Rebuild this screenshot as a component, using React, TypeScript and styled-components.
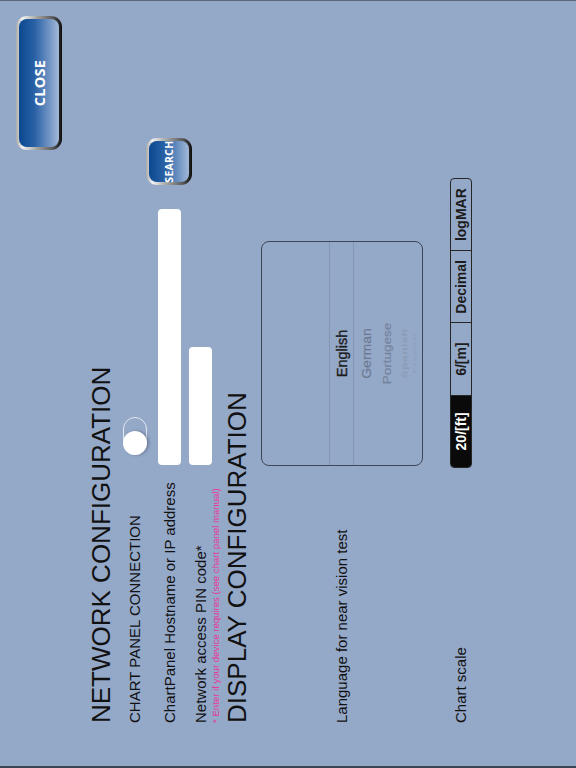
import styled, { createGlobalStyle } from "styled-components"

const GlobalStyle = createGlobalStyle`
  html, body {
    margin: 0;
    padding: 0;
    background: #94a8c8;
  }
  body {
    font-family: "Liberation Sans", Arial, sans-serif;
  }
`

// the app is drawn in landscape and turned a quarter to the left
const Viewport = styled.div`
  width: 576px;
  height: 768px;
  overflow: hidden;
  background: #94a8c8;
`

const Stage = styled.div`
  box-sizing: border-box;
  width: 768px;
  height: 576px;
  transform: translateY(768px) rotate(-90deg);
  transform-origin: 0 0;
  background: #94a8c8;
  border-left: 2px solid #3b4455;
  border-right: 1px solid #5b667a;
  padding: 16px 15px 0 43px;
  color: #141414;
`

const TopBar = styled.div`
  display: flex;
  justify-content: flex-end;
  height: 46px;
`

const GlossButton = styled.button<{ $w: number; $h: number }>`
  box-sizing: border-box;
  width: ${(p) => p.$w}px;
  height: ${(p) => p.$h}px;
  padding: 3px;
  border: none;
  border-radius: 11px;
  background: linear-gradient(
    to bottom,
    #a9a9a9 0%,
    #f2f2f2 14%,
    #a4a4a4 45%,
    #5a5a5a 80%,
    #0d0d0d 100%
  );
  cursor: pointer;
  flex: none;
`

const GlossFace = styled.span<{ $size: number }>`
  display: flex;
  align-items: center;
  justify-content: center;
  height: 100%;
  border-radius: 8px;
  background: linear-gradient(to bottom, #0b4890 0%, #2b62a6 40%, #a2b8d8 100%);
  color: #ffffff;
  font-family: "Open Sans", "Liberation Sans", sans-serif;
  font-weight: 700;
  font-size: ${(p) => p.$size}px;
  letter-spacing: 0.3px;
`

const Heading = styled.h1<{ $mt: number }>`
  margin: ${(p) => p.$mt}px 0 0;
  font-size: 26px;
  font-weight: 400;
  line-height: 30px;
  color: #111111;
  white-space: nowrap;
`

const Row = styled.div<{ $mt: number; $align?: string }>`
  display: grid;
  grid-template-columns: 258px auto;
  align-items: ${(p) => p.$align ?? "center"};
  margin-top: ${(p) => p.$mt}px;
`

const Controls = styled.div`
  display: flex;
  align-items: center;
  gap: 24px;
`

const Label = styled.div<{ $mt?: number }>`
  margin-top: ${(p) => p.$mt ?? 0}px;
  font-size: 15px;
  line-height: 18px;
  color: #111111;
  white-space: nowrap;
`

const Note = styled.div`
  font-size: 9.6px;
  line-height: 12px;
  color: #e8399a;
  white-space: nowrap;
`

const Switch = styled.div`
  box-sizing: border-box;
  display: flex;
  width: 38px;
  height: 24px;
  margin-left: 10px;
  border: 1.5px solid #e3e8f1;
  border-radius: 12px;
`

const Knob = styled.div`
  width: 24px;
  height: 24px;
  margin: -1.5px;
  border-radius: 50%;
  background: #ffffff;
  box-shadow: 0 2px 3px rgba(40, 50, 70, 0.35);
`

const TextField = styled.div<{ $w: number }>`
  width: ${(p) => p.$w}px;
  height: 23px;
  border-radius: 4px;
  background: #ffffff;
`

const SearchSlot = styled.div`
  margin: -12px 0 -11px;
  display: flex;
`

const Picker = styled.div`
  box-sizing: border-box;
  width: 225px;
  height: 162px;
  margin-left: -1px;
  padding-top: 67px;
  border: 1px solid #3f4657;
  border-radius: 8px;
  overflow: hidden;
  display: flex;
  flex-direction: column;
`

const PickerRow = styled.div<{
  $h: number
  $size: number
  $color: string
  $scale: number
  $selected?: boolean
  $spacing?: number
}>`
  box-sizing: border-box;
  flex: none;
  height: ${(p) => p.$h}px;
  display: flex;
  align-items: center;
  justify-content: center;
  border-top: ${(p) => (p.$selected ? "1px solid #8496b3" : "none")};
  border-bottom: ${(p) => (p.$selected ? "1px solid #8496b3" : "none")};
  font-size: ${(p) => p.$size}px;
  letter-spacing: ${(p) => p.$spacing ?? 0}px;
  color: ${(p) => p.$color};
  -webkit-text-stroke: ${(p) => (p.$selected ? "0.35px" : "0.15px")} ${(p) => p.$color};
  white-space: nowrap;

  span {
    display: inline-block;
    transform: scaleY(${(p) => p.$scale});
  }
`

const Segmented = styled.div`
  box-sizing: border-box;
  display: flex;
  width: 290px;
  height: 22px;
  margin-left: -3px;
  border: 1px solid #262626;
  border-radius: 4px;
  overflow: hidden;
`

const Segment = styled.div<{ $active?: boolean }>`
  flex: 1;
  display: flex;
  align-items: center;
  justify-content: center;
  background: ${(p) => (p.$active ? "#0a0a0a" : "transparent")};
  color: ${(p) => (p.$active ? "#ffffff" : "#1c1c1c")};
  font-size: 14px;
  font-weight: 700;
  & + & {
    border-left: 1px solid #262626;
  }
`

const languages = [
  { name: "English", h: 25, size: 14.5, color: "#1c1c1c", scale: 1, selected: true },
  { name: "German", h: 23, size: 14, color: "#6c7890", scale: 0.95 },
  { name: "Portugese", h: 21, size: 13.5, color: "#74829b", scale: 0.8 },
  { name: "Spanish", h: 13, size: 12, color: "#8a99b3", scale: 0.55, spacing: 1 },
  { name: "French", h: 8, size: 11, color: "#8e9eb8", scale: 0.3, spacing: 1 },
]

const scales = ["20/[ft]", "6/[m]", "Decimal", "logMAR"]

export default function App() {
  return (
    <Viewport>
      <GlobalStyle />
      <Stage>
        <TopBar>
          <GlossButton $w={134} $h={46}>
            <GlossFace $size={14.5}>CLOSE</GlossFace>
          </GlossButton>
        </TopBar>

        <Heading $mt={24}>NETWORK CONFIGURATION</Heading>

        <Row $mt={7}>
          <Label>CHART PANEL CONNECTION</Label>
          <Controls>
            <Switch>
              <Knob />
            </Switch>
          </Controls>
        </Row>

        <Row $mt={11}>
          <Label>ChartPanel Hostname or IP address</Label>
          <Controls>
            <TextField $w={256} />
            <SearchSlot>
              <GlossButton $w={47} $h={46}>
                <GlossFace $size={10.5}>SEARCH</GlossFace>
              </GlossButton>
            </SearchSlot>
          </Controls>
        </Row>

        <Row $mt={8} $align="start">
          <div>
            <Label $mt={3}>Network access PIN code*</Label>
            <Note>* Enter if your device requires (see chart panel manual)</Note>
          </div>
          <Controls>
            <TextField $w={118} />
          </Controls>
        </Row>

        <Heading $mt={0}>DISPLAY CONFIGURATION</Heading>

        <Row $mt={9}>
          <Label>Language for near vision test</Label>
          <Picker>
            {languages.map((l) => (
              <PickerRow
                key={l.name}
                $h={l.h}
                $size={l.size}
                $color={l.color}
                $scale={l.scale}
                $selected={l.selected}
                $spacing={l.spacing}
              >
                <span>{l.name}</span>
              </PickerRow>
            ))}
          </Picker>
        </Row>

        <Row $mt={27}>
          <Label>Chart scale</Label>
          <Segmented>
            {scales.map((s, i) => (
              <Segment key={s} $active={i === 0}>
                {s}
              </Segment>
            ))}
          </Segmented>
        </Row>
      </Stage>
    </Viewport>
  )
}
